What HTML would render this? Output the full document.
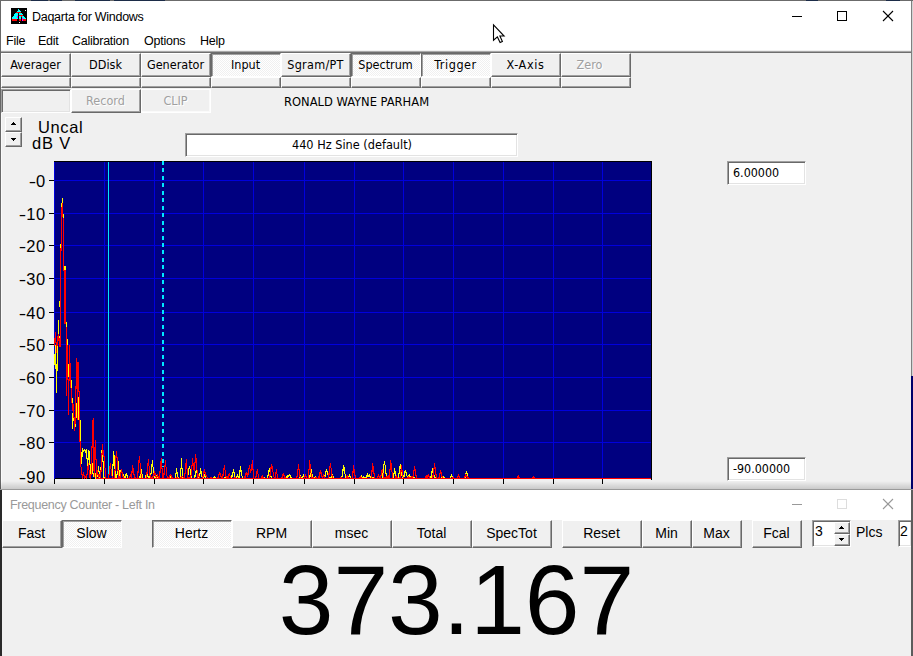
<!DOCTYPE html>
<html><head><meta charset="utf-8"><title>Daqarta for Windows</title>
<style>
*{box-sizing:border-box;margin:0;padding:0}
html,body{width:913px;height:656px;overflow:hidden;background:#f0f0f0}
body{position:relative;font-family:"Liberation Sans",sans-serif;color:#000}
.abs{position:absolute}
.tah{font-family:"DejaVu Sans Condensed","DejaVu Sans","Liberation Sans",sans-serif}
.btn{position:absolute;background:#f0f0f0;border-top:1px solid #fff;border-left:1px solid #fff;border-right:1px solid #696969;border-bottom:1px solid #696969;box-shadow:inset -1px -1px 0 #a0a0a0;padding:0 1px 1px 0;text-align:center;white-space:nowrap}
.btn span{display:block;position:relative}
.tb .btn{font-family:"DejaVu Sans Condensed","DejaVu Sans",sans-serif;font-size:12.5px;line-height:21px}
.tb .btn.dis{color:#a0a0a0;text-shadow:1px 1px 0 #fff}
.btn.down{border-top:1px solid #696969;border-left:1px solid #696969;border-right:1px solid #fff;border-bottom:1px solid #fff;box-shadow:inset 1px 1px 0 #a0a0a0;padding:1px 0 0 1px;background-color:#f7f7f7;background-image:repeating-conic-gradient(#ffffff 0% 25%, #f0f0f0 0% 50%);background-size:2px 2px}
.btn.down span{top:-1px;left:-1px}
.btn.flat{border:1px solid #fff;box-shadow:inset -1px -1px 0 #fafafa}
.strip{position:absolute;height:11px;background:#f0f0f0;border-top:1px solid #fff;border-left:1px solid #fff;border-right:1px solid #696969;border-bottom:1px solid #696969;box-shadow:inset -1px -1px 0 #a0a0a0}
.fc .btn{font-family:"Liberation Sans",sans-serif;font-size:14px;line-height:25px}
.sunk{position:absolute;background:#fff;border-top:1px solid #a0a0a0;border-left:1px solid #a0a0a0;border-right:1px solid #fff;border-bottom:1px solid #fff;box-shadow:inset 1px 1px 0 #696969,inset -1px -1px 0 #e3e3e3;padding:1px 0 0 1px;white-space:nowrap}
.menu span{position:absolute;top:33px;font-size:12.5px;line-height:16px;letter-spacing:-0.25px;white-space:nowrap}
.ylab{position:absolute;right:867px;font-size:16.5px;line-height:16px;white-space:nowrap;text-align:right;letter-spacing:0.7px}
.ylab i{display:inline-block;font-style:normal;transform:scaleX(1.35);transform-origin:100% 50%;margin-right:-0.8px}
</style></head><body>

<div class="abs" style="left:0;top:0;width:913px;height:1px;background:#6b6b6b"></div>
<div class="abs" style="left:31px;top:0;width:17px;height:1px;background:#1c2c48"></div>
<div class="abs" style="left:50px;top:0;width:12px;height:1px;background:#1c2c48"></div>
<div class="abs" style="left:75px;top:0;width:35px;height:1px;background:#1c2c48"></div>
<div class="abs" style="left:114px;top:0;width:51px;height:1px;background:#1c2c48"></div>
<div class="abs" style="left:806px;top:0;width:12px;height:1px;background:#1c2c48"></div>
<div class="abs" style="left:886px;top:0;width:14px;height:1px;background:#1c2c48"></div>
<div class="abs" style="left:1px;top:1px;width:910px;height:50px;background:#fff"></div>
<div class="abs" style="left:0;top:1px;width:1px;height:489px;background:#686868"></div>
<div class="abs" style="left:1px;top:53px;width:1px;height:436px;background:#fafafa"></div>
<div class="abs" style="left:911px;top:1px;width:1px;height:489px;background:#808080"></div>
<div class="abs" style="left:912px;top:1px;width:1px;height:489px;background:#d4d4d4"></div>
<svg class="abs" style="left:11px;top:8px" width="16" height="16" viewBox="0 0 16 16" shape-rendering="crispEdges"><rect width="16" height="16" fill="#000"/><rect x="7" y="1" width="1" height="1" fill="#00ffff"/><rect x="7" y="2" width="2" height="1" fill="#00ffff"/><rect x="14" y="2" width="1" height="1" fill="#ffffff"/><rect x="6" y="3" width="4" height="1" fill="#00ffff"/><rect x="5" y="4" width="5" height="1" fill="#ff0000"/><rect x="4" y="5" width="3" height="1" fill="#00ffff"/><rect x="8" y="5" width="3" height="1" fill="#00ffff"/><rect x="3" y="6" width="4" height="1" fill="#00ffff"/><rect x="8" y="6" width="4" height="1" fill="#00ffff"/><rect x="3" y="7" width="4" height="1" fill="#00ffff"/><rect x="8" y="7" width="4" height="1" fill="#ff0000"/><rect x="2" y="8" width="4" height="1" fill="#00ffff"/><rect x="6" y="8" width="1" height="1" fill="#ff00ff"/><rect x="8" y="8" width="2" height="1" fill="#00ffff"/><rect x="10" y="8" width="1" height="1" fill="#ff0000"/><rect x="11" y="8" width="2" height="1" fill="#00ffff"/><rect x="1" y="9" width="5" height="1" fill="#00ffff"/><rect x="6" y="9" width="1" height="1" fill="#ff00ff"/><rect x="8" y="9" width="2" height="1" fill="#00ffff"/><rect x="11" y="9" width="3" height="1" fill="#00ffff"/><rect x="1" y="10" width="6" height="1" fill="#00ffff"/><rect x="8" y="10" width="2" height="1" fill="#00ffff"/><rect x="11" y="10" width="1" height="1" fill="#ff00ff"/><rect x="12" y="10" width="3" height="1" fill="#00ffff"/><rect x="1" y="11" width="5" height="1" fill="#ff0000"/><rect x="8" y="11" width="2" height="1" fill="#ff0000"/><rect x="11" y="11" width="1" height="1" fill="#ff00ff"/><rect x="12" y="11" width="3" height="1" fill="#ff0000"/><rect x="1" y="12" width="5" height="1" fill="#ff0000"/><rect x="8" y="12" width="2" height="1" fill="#ff0000"/><rect x="11" y="12" width="1" height="1" fill="#ff00ff"/><rect x="12" y="12" width="3" height="1" fill="#ff0000"/><rect x="8" y="14" width="1" height="1" fill="#ffffff"/></svg>
<div class="abs" style="left:32px;top:9px;font-size:12.5px;line-height:16px;white-space:nowrap;letter-spacing:-0.27px">Daqarta for Windows</div>
<svg class="abs" style="left:780px;top:1px" width="130" height="30" viewBox="0 0 130 30" shape-rendering="crispEdges">
<rect x="12" y="15" width="10" height="1" fill="#000"/>
<rect x="57.5" y="10.5" width="9" height="9" fill="none" stroke="#000" stroke-width="1"/>
<g shape-rendering="auto" stroke="#000" stroke-width="1.1"><line x1="103" y1="10" x2="113" y2="20"/><line x1="113" y1="10" x2="103" y2="20"/></g>
</svg>
<svg class="abs" style="left:492px;top:23px" width="15" height="23" viewBox="0 0 15 23">
<path d="M1.5,1.9 L1.5,17.2 L5.4,13.9 L8.1,19.5 L10.4,18.5 L7.9,13 L12.1,13 Z" fill="#fff" stroke="#000" stroke-width="1.1" stroke-linejoin="miter"/></svg>
<div class="menu">
<span style="left:6px">File</span>
<span style="left:38px">Edit</span>
<span style="left:72px">Calibration</span>
<span style="left:144px">Options</span>
<span style="left:200px">Help</span>
</div>
<div class="abs" style="left:1px;top:50px;width:910px;height:1px;background:#f0f0f0"></div>
<div class="abs" style="left:1px;top:51px;width:910px;height:1px;background:#a8a8a8"></div>
<div class="abs" style="left:1px;top:52px;width:910px;height:1px;background:#6e6e6e"></div>
<div class="tb">
<div class="btn " style="left:1px;top:53px;width:70px;height:24px;"><span style="">Averager</span></div>
<div class="strip" style="left:1px;top:77px;width:70px"></div>
<div class="btn " style="left:71px;top:53px;width:70px;height:24px;"><span style="">DDisk</span></div>
<div class="strip" style="left:71px;top:77px;width:70px"></div>
<div class="btn " style="left:141px;top:53px;width:70px;height:24px;"><span style="">Generator</span></div>
<div class="strip" style="left:141px;top:77px;width:70px"></div>
<div class="btn down" style="left:211px;top:53px;width:70px;height:24px;"><span style="">Input</span></div>
<div class="strip" style="left:211px;top:77px;width:70px"></div>
<div class="btn " style="left:281px;top:53px;width:70px;height:24px;"><span style="letter-spacing:0.3px">Sgram/PT</span></div>
<div class="strip" style="left:281px;top:77px;width:70px"></div>
<div class="btn down" style="left:351px;top:53px;width:70px;height:24px;"><span style="">Spectrum</span></div>
<div class="strip" style="left:351px;top:77px;width:70px"></div>
<div class="btn down" style="left:421px;top:53px;width:70px;height:24px;"><span style="letter-spacing:0.55px">Trigger</span></div>
<div class="strip" style="left:421px;top:77px;width:70px"></div>
<div class="btn " style="left:491px;top:53px;width:70px;height:24px;"><span style="letter-spacing:0.65px">X-Axis</span></div>
<div class="strip" style="left:491px;top:77px;width:70px"></div>
<div class="btn dis" style="left:561px;top:53px;width:70px;height:24px;"><span style="left:-6px">Zero</span></div>
<div class="strip" style="left:561px;top:77px;width:70px"></div>
<div class="sunk" style="left:1px;top:89px;width:70px;height:24px;background:#f0f0f0"></div>
<div class="btn dis" style="left:71px;top:89px;width:70px;height:24px;"><span style="">Record</span></div>
<div class="btn dis flat" style="left:141px;top:89px;width:70px;height:24px;"><span style="">CLIP</span></div>
</div>
<div class="abs tah" style="left:284px;top:94px;font-size:12.8px;line-height:16px;white-space:nowrap">RONALD WAYNE PARHAM</div>
<div class="btn" style="left:5px;top:117px;width:17px;height:15px"></div>
<div class="btn" style="left:5px;top:132px;width:17px;height:15px"></div>
<svg class="abs" style="left:5px;top:117px" width="17" height="30" viewBox="0 0 17 30" shape-rendering="crispEdges">
<path d="M8,5h1v1h1v1h1v1h-5v-1h1v-1h1z M6,21h5v1h-1v1h-1v1h-1v-1h-1v-1h-1z" fill="#000"/></svg>
<div class="abs" style="left:38px;top:118px;font-size:16.5px;line-height:18px;white-space:nowrap;letter-spacing:0.6px">Uncal</div>
<div class="abs" style="left:32px;top:134px;font-size:16.5px;line-height:18px;white-space:nowrap;letter-spacing:0.8px">dB V</div>
<div class="sunk tah" style="left:185px;top:133px;width:333px;height:24px;text-align:center;font-size:12.6px;line-height:20px">440 Hz Sine (default)</div>
<div class="sunk tah" style="left:727px;top:161px;width:79px;height:24px;font-size:12.4px;line-height:20px;padding-left:5px">6.00000</div>
<div class="sunk tah" style="left:727px;top:457px;width:79px;height:24px;font-size:12.4px;line-height:20px;padding-left:5px">-90.00000</div>
<svg class="abs" style="left:0;top:155px" width="700" height="335" viewBox="0 155 700 335" shape-rendering="crispEdges">
<rect x="54" y="161" width="598" height="318" fill="#000080"/>
<rect x="54" y="161" width="598" height="1" fill="#000"/>
<rect x="54" y="478" width="598" height="1" fill="#000"/>
<rect x="54" y="180" width="598" height="1" fill="#0000dc"/>
<rect x="49" y="180" width="5" height="1" fill="#000"/>
<rect x="54" y="213" width="598" height="1" fill="#0000dc"/>
<rect x="49" y="213" width="5" height="1" fill="#000"/>
<rect x="54" y="245" width="598" height="1" fill="#0000dc"/>
<rect x="49" y="245" width="5" height="1" fill="#000"/>
<rect x="54" y="278" width="598" height="1" fill="#0000dc"/>
<rect x="49" y="278" width="5" height="1" fill="#000"/>
<rect x="54" y="312" width="598" height="1" fill="#0000dc"/>
<rect x="49" y="312" width="5" height="1" fill="#000"/>
<rect x="54" y="344" width="598" height="1" fill="#0000dc"/>
<rect x="49" y="344" width="5" height="1" fill="#000"/>
<rect x="54" y="377" width="598" height="1" fill="#0000dc"/>
<rect x="49" y="377" width="5" height="1" fill="#000"/>
<rect x="54" y="410" width="598" height="1" fill="#0000dc"/>
<rect x="49" y="410" width="5" height="1" fill="#000"/>
<rect x="54" y="442" width="598" height="1" fill="#0000dc"/>
<rect x="49" y="442" width="5" height="1" fill="#000"/>
<rect x="54" y="162" width="1" height="317" fill="#0000dc"/>
<rect x="54" y="479" width="1" height="5" fill="#000"/>
<rect x="104" y="162" width="1" height="317" fill="#0000dc"/>
<rect x="104" y="479" width="1" height="5" fill="#000"/>
<rect x="154" y="162" width="1" height="317" fill="#0000dc"/>
<rect x="154" y="479" width="1" height="5" fill="#000"/>
<rect x="203" y="162" width="1" height="317" fill="#0000dc"/>
<rect x="203" y="479" width="1" height="5" fill="#000"/>
<rect x="253" y="162" width="1" height="317" fill="#0000dc"/>
<rect x="253" y="479" width="1" height="5" fill="#000"/>
<rect x="304" y="162" width="1" height="317" fill="#0000dc"/>
<rect x="304" y="479" width="1" height="5" fill="#000"/>
<rect x="354" y="162" width="1" height="317" fill="#0000dc"/>
<rect x="354" y="479" width="1" height="5" fill="#000"/>
<rect x="403" y="162" width="1" height="317" fill="#0000dc"/>
<rect x="403" y="479" width="1" height="5" fill="#000"/>
<rect x="453" y="162" width="1" height="317" fill="#0000dc"/>
<rect x="453" y="479" width="1" height="5" fill="#000"/>
<rect x="503" y="162" width="1" height="317" fill="#0000dc"/>
<rect x="503" y="479" width="1" height="5" fill="#000"/>
<rect x="553" y="162" width="1" height="317" fill="#0000dc"/>
<rect x="553" y="479" width="1" height="5" fill="#000"/>
<rect x="602" y="162" width="1" height="317" fill="#0000dc"/>
<rect x="602" y="479" width="1" height="5" fill="#000"/>
<rect x="108" y="162" width="1" height="317" fill="#00e8ff"/>
<line x1="163" y1="161" x2="163" y2="467" stroke="#00e8ff" stroke-width="2" stroke-dasharray="4,3.45"/>
<path fill="#ffff00" d="M57,336h1v35h-1zM67,352h1v25h-1zM72,413h1v16h-1zM78,397h1v23h-1zM54,354h1v11h-1zM55,345h1v24h-1zM56,364h1v29h-1zM57,336h1v29h-1zM58,320h1v19h-1zM59,301h1v6h-1zM59,336h1v5h-1zM60,244h1v5h-1zM61,203h1v5h-1zM62,198h1v6h-1zM63,214h1v5h-1zM64,266h1v5h-1zM65,266h1v5h-1zM66,322h1v6h-1zM67,339h1v26h-1zM68,364h1v13h-1zM69,360h1v9h-1zM70,364h1v17h-1zM71,380h1v18h-1zM72,398h1v11h-1zM73,408h1v13h-1zM74,421h1v8h-1zM75,416h1v11h-1zM76,403h1v15h-1zM77,397h1v12h-1zM78,408h1v12h-1zM79,400h1v21h-1zM80,420h1v32h-1zM81,452h1v12h-1zM82,448h1v9h-1zM83,450h1v2h-1zM84,449h1v2h-1zM85,450h1v3h-1zM86,449h1v10h-1zM87,458h1v10h-1zM88,450h1v10h-1zM89,451h1v14h-1zM90,464h1v13h-1zM91,455h1v12h-1zM92,463h1v11h-1zM93,473h1v4h-1zM94,472h1v4h-1zM95,473h1v6h-1zM96,468h1v6h-1zM97,471h1v6h-1zM98,466h1v6h-1zM99,471h1v7h-1zM100,467h1v12h-1zM101,450h1v19h-1zM102,444h1v18h-1zM103,461h1v18h-1zM104,477h1v2h-1zM105,477h1v2h-1zM106,478h1v1h-1zM107,478h1v1h-1zM108,478h1v1h-1zM109,478h1v1h-1zM110,478h1v1h-1zM111,478h1v1h-1zM112,464h1v15h-1zM113,451h1v15h-1zM114,455h1v14h-1zM115,469h1v10h-1zM116,474h1v5h-1zM117,465h1v10h-1zM118,461h1v9h-1zM119,470h1v9h-1zM120,470h1v6h-1zM121,469h1v3h-1zM122,472h1v3h-1zM123,474h1v3h-1zM124,476h1v3h-1zM125,474h1v4h-1zM126,473h1v3h-1zM127,475h1v3h-1zM128,478h1v1h-1zM129,478h1v1h-1zM130,478h1v1h-1zM131,478h1v1h-1zM132,478h1v1h-1zM133,478h1v1h-1zM134,478h1v1h-1zM135,478h1v1h-1zM136,478h1v1h-1zM137,478h1v1h-1zM138,478h1v1h-1zM139,476h1v3h-1zM140,472h1v6h-1zM141,469h1v5h-1zM142,474h1v5h-1zM143,478h1v1h-1zM144,478h1v1h-1zM145,475h1v4h-1zM146,472h1v4h-1zM147,474h1v3h-1zM148,476h1v3h-1zM149,475h1v3h-1zM150,473h1v6h-1zM151,464h1v10h-1zM152,460h1v7h-1zM153,467h1v9h-1zM154,476h1v3h-1zM155,476h1v3h-1zM156,475h1v3h-1zM157,477h1v2h-1zM158,478h1v1h-1zM159,478h1v1h-1zM160,478h1v1h-1zM161,478h1v1h-1zM162,478h1v1h-1zM163,478h1v1h-1zM164,478h1v1h-1zM165,478h1v1h-1zM166,478h1v1h-1zM167,478h1v1h-1zM168,478h1v1h-1zM169,476h1v3h-1zM170,475h1v3h-1zM171,477h1v2h-1zM172,478h1v1h-1zM173,478h1v1h-1zM174,478h1v1h-1zM175,473h1v6h-1zM176,468h1v6h-1zM177,472h1v5h-1zM178,477h1v2h-1zM179,478h1v1h-1zM180,468h1v11h-1zM181,458h1v11h-1zM182,468h1v11h-1zM183,478h1v1h-1zM184,478h1v1h-1zM185,478h1v1h-1zM186,478h1v1h-1zM187,474h1v5h-1zM188,468h1v7h-1zM189,466h1v3h-1zM190,469h1v6h-1zM191,475h1v4h-1zM192,478h1v1h-1zM193,478h1v1h-1zM194,475h1v4h-1zM195,471h1v6h-1zM196,470h1v3h-1zM197,472h1v4h-1zM198,476h1v3h-1zM199,473h1v6h-1zM200,468h1v6h-1zM201,471h1v6h-1zM202,476h1v3h-1zM203,476h1v3h-1zM204,474h1v3h-1zM205,476h1v3h-1zM206,478h1v1h-1zM207,478h1v1h-1zM208,478h1v1h-1zM209,478h1v1h-1zM210,478h1v1h-1zM211,478h1v1h-1zM212,478h1v1h-1zM213,477h1v2h-1zM214,476h1v2h-1zM215,477h1v2h-1zM216,478h1v1h-1zM217,478h1v1h-1zM218,478h1v1h-1zM219,478h1v1h-1zM220,478h1v1h-1zM221,478h1v1h-1zM222,478h1v1h-1zM223,478h1v1h-1zM224,477h1v2h-1zM225,476h1v2h-1zM226,477h1v2h-1zM227,478h1v1h-1zM228,478h1v1h-1zM229,478h1v1h-1zM230,477h1v2h-1zM231,475h1v3h-1zM232,472h1v5h-1zM233,469h1v4h-1zM234,472h1v5h-1zM235,477h1v2h-1zM236,476h1v3h-1zM237,474h1v3h-1zM238,476h1v3h-1zM239,470h1v8h-1zM240,466h1v6h-1zM241,470h1v6h-1zM242,476h1v3h-1zM243,478h1v1h-1zM244,478h1v1h-1zM245,478h1v1h-1zM246,478h1v1h-1zM247,478h1v1h-1zM248,478h1v1h-1zM249,478h1v1h-1zM250,478h1v1h-1zM251,478h1v1h-1zM252,478h1v1h-1zM253,478h1v1h-1zM254,478h1v1h-1zM255,478h1v1h-1zM256,478h1v1h-1zM257,478h1v1h-1zM258,478h1v1h-1zM259,478h1v1h-1zM260,478h1v1h-1zM261,478h1v1h-1zM262,478h1v1h-1zM263,477h1v2h-1zM264,477h1v2h-1zM265,478h1v1h-1zM266,478h1v1h-1zM267,475h1v4h-1zM268,470h1v6h-1zM269,468h1v4h-1zM270,471h1v6h-1zM271,476h1v3h-1zM272,478h1v1h-1zM273,478h1v1h-1zM274,478h1v1h-1zM275,478h1v1h-1zM276,478h1v1h-1zM277,478h1v1h-1zM278,478h1v1h-1zM279,478h1v1h-1zM280,478h1v1h-1zM281,478h1v1h-1zM282,478h1v1h-1zM283,478h1v1h-1zM284,478h1v1h-1zM285,478h1v1h-1zM286,476h1v3h-1zM287,475h1v3h-1zM288,475h1v2h-1zM289,474h1v2h-1zM290,475h1v3h-1zM291,477h1v2h-1zM292,478h1v1h-1zM293,478h1v1h-1zM294,478h1v1h-1zM295,478h1v1h-1zM296,478h1v1h-1zM297,478h1v1h-1zM298,478h1v1h-1zM299,476h1v3h-1zM300,475h1v3h-1zM301,477h1v2h-1zM302,476h1v3h-1zM303,474h1v3h-1zM304,476h1v3h-1zM305,478h1v1h-1zM306,478h1v1h-1zM307,478h1v1h-1zM308,478h1v1h-1zM309,475h1v4h-1zM310,471h1v6h-1zM311,469h1v5h-1zM312,474h1v5h-1zM313,478h1v1h-1zM314,477h1v2h-1zM315,476h1v2h-1zM316,477h1v2h-1zM317,478h1v1h-1zM318,478h1v1h-1zM319,478h1v1h-1zM320,478h1v1h-1zM321,478h1v1h-1zM322,478h1v1h-1zM323,478h1v1h-1zM324,475h1v4h-1zM325,471h1v6h-1zM326,469h1v3h-1zM327,471h1v4h-1zM328,474h1v3h-1zM329,477h1v2h-1zM330,477h1v2h-1zM331,475h1v3h-1zM332,474h1v3h-1zM333,476h1v3h-1zM334,478h1v1h-1zM335,478h1v1h-1zM336,478h1v1h-1zM337,478h1v1h-1zM338,478h1v1h-1zM339,478h1v1h-1zM340,478h1v1h-1zM341,476h1v3h-1zM342,469h1v8h-1zM343,465h1v6h-1zM344,467h1v7h-1zM345,474h1v5h-1zM346,478h1v1h-1zM347,478h1v1h-1zM348,476h1v3h-1zM349,474h1v3h-1zM350,476h1v3h-1zM351,478h1v1h-1zM352,478h1v1h-1zM353,478h1v1h-1zM354,478h1v1h-1zM355,478h1v1h-1zM356,478h1v1h-1zM357,478h1v1h-1zM358,478h1v1h-1zM359,477h1v2h-1zM360,476h1v3h-1zM361,475h1v2h-1zM362,477h1v2h-1zM363,476h1v2h-1zM364,477h1v2h-1zM365,477h1v2h-1zM366,475h1v4h-1zM367,473h1v4h-1zM368,475h1v2h-1zM369,474h1v3h-1zM370,476h1v3h-1zM371,478h1v1h-1zM372,477h1v2h-1zM373,477h1v2h-1zM374,478h1v1h-1zM375,478h1v1h-1zM376,478h1v1h-1zM377,478h1v1h-1zM378,478h1v1h-1zM379,478h1v1h-1zM380,478h1v1h-1zM381,478h1v1h-1zM382,472h1v7h-1zM383,464h1v10h-1zM384,461h1v4h-1zM385,465h1v9h-1zM386,473h1v6h-1zM387,478h1v1h-1zM388,477h1v2h-1zM389,477h1v2h-1zM390,478h1v1h-1zM391,478h1v1h-1zM392,478h1v1h-1zM393,473h1v6h-1zM394,468h1v6h-1zM395,471h1v6h-1zM396,476h1v3h-1zM397,478h1v1h-1zM398,473h1v6h-1zM399,466h1v8h-1zM400,464h1v5h-1zM401,468h1v8h-1zM402,475h1v4h-1zM403,475h1v4h-1zM404,471h1v6h-1zM405,470h1v3h-1zM406,472h1v4h-1zM407,476h1v3h-1zM408,475h1v4h-1zM409,474h1v3h-1zM410,476h1v2h-1zM411,478h1v1h-1zM412,476h1v3h-1zM413,475h1v3h-1zM414,477h1v2h-1zM415,478h1v1h-1zM416,478h1v1h-1zM417,478h1v1h-1zM418,478h1v1h-1zM419,478h1v1h-1zM420,478h1v1h-1zM421,478h1v1h-1zM422,478h1v1h-1zM423,478h1v1h-1zM424,478h1v1h-1zM425,478h1v1h-1zM426,478h1v1h-1zM427,478h1v1h-1zM428,478h1v1h-1zM429,478h1v1h-1zM430,476h1v3h-1zM431,471h1v7h-1zM432,468h1v5h-1zM433,470h1v5h-1zM434,475h1v4h-1zM435,477h1v2h-1zM436,477h1v1h-1zM437,478h1v1h-1zM438,478h1v1h-1zM439,478h1v1h-1zM440,478h1v1h-1zM441,477h1v2h-1zM442,476h1v3h-1zM443,476h1v2h-1zM444,477h1v2h-1zM445,478h1v1h-1zM446,478h1v1h-1zM447,478h1v1h-1zM448,478h1v1h-1zM449,478h1v1h-1zM450,476h1v3h-1zM451,474h1v3h-1zM452,476h1v3h-1zM453,478h1v1h-1zM454,478h1v1h-1zM455,478h1v1h-1zM456,478h1v1h-1zM457,478h1v1h-1zM458,478h1v1h-1zM459,478h1v1h-1zM460,478h1v1h-1zM461,478h1v1h-1zM462,478h1v1h-1zM463,478h1v1h-1zM464,476h1v3h-1zM465,473h1v5h-1zM466,471h1v3h-1zM467,473h1v4h-1zM468,477h1v2h-1zM469,478h1v1h-1zM470,478h1v1h-1zM471,478h1v1h-1zM472,478h1v1h-1zM473,478h1v1h-1zM474,478h1v1h-1zM475,478h1v1h-1zM476,478h1v1h-1zM477,478h1v1h-1zM478,478h1v1h-1zM479,478h1v1h-1zM480,478h1v1h-1zM481,478h1v1h-1zM482,478h1v1h-1zM483,478h1v1h-1zM484,478h1v1h-1zM485,478h1v1h-1zM486,478h1v1h-1zM487,478h1v1h-1zM488,478h1v1h-1zM489,478h1v1h-1zM490,478h1v1h-1zM491,478h1v1h-1zM492,478h1v1h-1zM493,478h1v1h-1zM494,478h1v1h-1zM495,478h1v1h-1zM496,478h1v1h-1zM497,478h1v1h-1zM498,478h1v1h-1zM499,478h1v1h-1zM500,478h1v1h-1zM501,478h1v1h-1zM502,478h1v1h-1zM503,478h1v1h-1zM504,478h1v1h-1zM505,478h1v1h-1zM506,478h1v1h-1zM507,478h1v1h-1zM508,478h1v1h-1zM509,478h1v1h-1zM510,478h1v1h-1zM511,478h1v1h-1zM512,478h1v1h-1zM513,478h1v1h-1zM514,478h1v1h-1zM515,478h1v1h-1zM516,478h1v1h-1zM517,477h1v2h-1zM518,476h1v2h-1zM519,477h1v2h-1zM520,478h1v1h-1zM521,478h1v1h-1zM522,478h1v1h-1zM523,478h1v1h-1zM524,478h1v1h-1zM525,478h1v1h-1zM526,478h1v1h-1zM527,478h1v1h-1zM528,478h1v1h-1zM529,478h1v1h-1zM530,478h1v1h-1zM531,478h1v1h-1zM532,477h1v2h-1zM533,477h1v2h-1zM534,478h1v1h-1zM535,478h1v1h-1zM536,478h1v1h-1zM537,478h1v1h-1zM538,478h1v1h-1zM539,478h1v1h-1zM540,478h1v1h-1zM541,478h1v1h-1zM542,478h1v1h-1zM543,478h1v1h-1zM544,478h1v1h-1zM545,478h1v1h-1zM546,478h1v1h-1zM547,478h1v1h-1zM548,478h1v1h-1zM549,478h1v1h-1zM550,478h1v1h-1zM551,478h1v1h-1zM552,478h1v1h-1zM553,478h1v1h-1zM554,478h1v1h-1zM555,478h1v1h-1zM556,478h1v1h-1zM557,478h1v1h-1zM558,478h1v1h-1zM559,478h1v1h-1zM560,478h1v1h-1zM561,478h1v1h-1zM562,478h1v1h-1zM563,478h1v1h-1zM564,478h1v1h-1zM565,478h1v1h-1zM566,478h1v1h-1zM567,478h1v1h-1zM568,478h1v1h-1zM569,478h1v1h-1zM570,478h1v1h-1zM571,478h1v1h-1zM572,478h1v1h-1zM573,478h1v1h-1zM574,478h1v1h-1zM575,478h1v1h-1zM576,478h1v1h-1zM577,478h1v1h-1zM578,478h1v1h-1zM579,478h1v1h-1zM580,478h1v1h-1zM581,478h1v1h-1zM582,478h1v1h-1zM583,478h1v1h-1zM584,478h1v1h-1zM585,478h1v1h-1zM586,478h1v1h-1zM587,478h1v1h-1zM588,478h1v1h-1zM589,478h1v1h-1zM590,478h1v1h-1zM591,478h1v1h-1zM592,478h1v1h-1zM593,478h1v1h-1zM594,478h1v1h-1zM595,478h1v1h-1zM596,478h1v1h-1zM597,478h1v1h-1zM598,478h1v1h-1zM599,478h1v1h-1zM600,478h1v1h-1zM601,478h1v1h-1zM602,478h1v1h-1zM603,478h1v1h-1zM604,478h1v1h-1zM605,478h1v1h-1zM606,478h1v1h-1zM607,478h1v1h-1zM608,478h1v1h-1zM609,478h1v1h-1zM610,478h1v1h-1zM611,478h1v1h-1zM612,478h1v1h-1zM613,478h1v1h-1zM614,478h1v1h-1zM615,478h1v1h-1zM616,478h1v1h-1zM617,478h1v1h-1zM618,478h1v1h-1zM619,478h1v1h-1zM620,478h1v1h-1zM621,478h1v1h-1zM622,478h1v1h-1zM623,478h1v1h-1zM624,478h1v1h-1zM625,478h1v1h-1zM626,478h1v1h-1zM627,478h1v1h-1zM628,478h1v1h-1zM629,478h1v1h-1zM630,478h1v1h-1zM631,478h1v1h-1zM632,478h1v1h-1zM633,478h1v1h-1zM634,478h1v1h-1zM635,478h1v1h-1zM636,478h1v1h-1zM637,478h1v1h-1zM638,478h1v1h-1zM639,478h1v1h-1zM640,478h1v1h-1zM641,478h1v1h-1zM642,478h1v1h-1zM643,478h1v1h-1zM644,478h1v1h-1zM645,478h1v1h-1zM646,478h1v1h-1zM647,478h1v1h-1zM648,478h1v1h-1zM649,478h1v1h-1zM650,478h1v1h-1zM651,478h1v1h-1z"/>
<path fill="#ff0000" d="M69,345h1v32h-1zM77,362h1v58h-1zM93,418h1v53h-1zM54,338h1v8h-1zM55,332h1v11h-1zM56,342h1v11h-1zM57,336h1v10h-1zM58,334h1v7h-1zM59,338h1v9h-1zM60,248h1v99h-1zM61,207h1v44h-1zM62,203h1v14h-1zM63,218h1v53h-1zM64,270h1v54h-1zM65,270h1v54h-1zM66,327h1v69h-1zM67,345h1v35h-1zM68,379h1v36h-1zM69,345h1v36h-1zM70,363h1v25h-1zM71,388h1v15h-1zM72,403h1v8h-1zM73,404h1v14h-1zM74,417h1v14h-1zM75,386h1v38h-1zM76,358h1v31h-1zM77,389h1v31h-1zM78,362h1v30h-1zM79,391h1v51h-1zM80,441h1v26h-1zM81,467h1v8h-1zM82,474h1v5h-1zM83,472h1v4h-1zM84,475h1v4h-1zM85,476h1v2h-1zM86,474h1v5h-1zM87,466h1v9h-1zM88,463h1v7h-1zM89,470h1v8h-1zM90,474h1v5h-1zM91,446h1v29h-1zM92,420h1v28h-1zM93,418h1v30h-1zM94,447h1v30h-1zM95,440h1v20h-1zM96,459h1v20h-1zM97,470h1v5h-1zM98,474h1v5h-1zM99,474h1v3h-1zM100,470h1v9h-1zM101,453h1v19h-1zM102,444h1v11h-1zM103,450h1v7h-1zM104,456h1v12h-1zM105,468h1v11h-1zM106,478h1v1h-1zM107,478h1v1h-1zM108,474h1v5h-1zM109,466h1v9h-1zM110,463h1v6h-1zM111,469h1v7h-1zM112,476h1v2h-1zM113,478h1v1h-1zM114,470h1v9h-1zM115,456h1v15h-1zM116,451h1v7h-1zM117,457h1v14h-1zM118,470h1v9h-1zM119,476h1v3h-1zM120,472h1v6h-1zM121,469h1v4h-1zM122,472h1v5h-1zM123,476h1v3h-1zM124,478h1v1h-1zM125,478h1v1h-1zM126,478h1v1h-1zM127,478h1v1h-1zM128,478h1v1h-1zM129,476h1v3h-1zM130,474h1v3h-1zM131,471h1v8h-1zM132,465h1v8h-1zM133,468h1v7h-1zM134,474h1v5h-1zM135,477h1v2h-1zM136,478h1v1h-1zM137,471h1v8h-1zM138,460h1v13h-1zM139,456h1v7h-1zM140,463h1v11h-1zM141,474h1v5h-1zM142,478h1v1h-1zM143,478h1v1h-1zM144,478h1v1h-1zM145,478h1v1h-1zM146,472h1v7h-1zM147,463h1v11h-1zM148,459h1v7h-1zM149,466h1v10h-1zM150,475h1v4h-1zM151,477h1v2h-1zM152,476h1v2h-1zM153,473h1v4h-1zM154,471h1v4h-1zM155,473h1v4h-1zM156,476h1v3h-1zM157,474h1v3h-1zM158,476h1v3h-1zM159,471h1v8h-1zM160,461h1v12h-1zM161,458h1v11h-1zM162,468h1v11h-1zM163,473h1v6h-1zM164,465h1v10h-1zM165,460h1v7h-1zM166,467h1v9h-1zM167,476h1v3h-1zM168,477h1v2h-1zM169,475h1v3h-1zM170,474h1v2h-1zM171,475h1v3h-1zM172,477h1v2h-1zM173,478h1v1h-1zM174,478h1v1h-1zM175,478h1v1h-1zM176,477h1v2h-1zM177,477h1v2h-1zM178,478h1v1h-1zM179,478h1v1h-1zM180,477h1v2h-1zM181,476h1v2h-1zM182,476h1v1h-1zM183,477h1v1h-1zM184,473h1v6h-1zM185,463h1v11h-1zM186,459h1v10h-1zM187,469h1v10h-1zM188,477h1v2h-1zM189,477h1v2h-1zM190,475h1v4h-1zM191,465h1v11h-1zM192,458h1v8h-1zM193,463h1v7h-1zM194,462h1v9h-1zM195,454h1v9h-1zM196,458h1v12h-1zM197,470h1v9h-1zM198,474h1v3h-1zM199,476h1v3h-1zM200,478h1v1h-1zM201,478h1v1h-1zM202,476h1v3h-1zM203,471h1v6h-1zM204,469h1v4h-1zM205,472h1v4h-1zM206,475h1v2h-1zM207,477h1v2h-1zM208,478h1v1h-1zM209,478h1v1h-1zM210,477h1v2h-1zM211,477h1v2h-1zM212,478h1v1h-1zM213,478h1v1h-1zM214,478h1v1h-1zM215,478h1v1h-1zM216,478h1v1h-1zM217,477h1v2h-1zM218,474h1v4h-1zM219,472h1v3h-1zM220,473h1v4h-1zM221,476h1v3h-1zM222,474h1v5h-1zM223,468h1v8h-1zM224,465h1v5h-1zM225,470h1v7h-1zM226,476h1v3h-1zM227,476h1v3h-1zM228,474h1v4h-1zM229,473h1v3h-1zM230,476h1v3h-1zM231,478h1v1h-1zM232,478h1v1h-1zM233,478h1v1h-1zM234,477h1v2h-1zM235,477h1v2h-1zM236,478h1v1h-1zM237,478h1v1h-1zM238,478h1v1h-1zM239,478h1v1h-1zM240,478h1v1h-1zM241,478h1v1h-1zM242,478h1v1h-1zM243,478h1v1h-1zM244,476h1v3h-1zM245,473h1v5h-1zM246,472h1v3h-1zM247,473h1v4h-1zM248,468h1v7h-1zM249,465h1v4h-1zM250,469h1v4h-1zM251,464h1v7h-1zM252,460h1v10h-1zM253,469h1v10h-1zM254,478h1v1h-1zM255,476h1v3h-1zM256,471h1v6h-1zM257,469h1v5h-1zM258,474h1v5h-1zM259,478h1v1h-1zM260,478h1v1h-1zM261,476h1v3h-1zM262,475h1v3h-1zM263,477h1v2h-1zM264,478h1v1h-1zM265,478h1v1h-1zM266,478h1v1h-1zM267,478h1v1h-1zM268,478h1v1h-1zM269,474h1v5h-1zM270,467h1v9h-1zM271,464h1v5h-1zM272,466h1v6h-1zM273,472h1v5h-1zM274,477h1v2h-1zM275,472h1v6h-1zM276,469h1v5h-1zM277,474h1v5h-1zM278,478h1v1h-1zM279,478h1v1h-1zM280,478h1v1h-1zM281,477h1v2h-1zM282,474h1v4h-1zM283,473h1v3h-1zM284,475h1v3h-1zM285,477h1v2h-1zM286,478h1v1h-1zM287,478h1v1h-1zM288,478h1v1h-1zM289,478h1v1h-1zM290,478h1v1h-1zM291,478h1v1h-1zM292,478h1v1h-1zM293,478h1v1h-1zM294,478h1v1h-1zM295,478h1v1h-1zM296,476h1v3h-1zM297,469h1v8h-1zM298,464h1v6h-1zM299,469h1v8h-1zM300,476h1v3h-1zM301,478h1v1h-1zM302,478h1v1h-1zM303,478h1v1h-1zM304,476h1v3h-1zM305,474h1v3h-1zM306,476h1v3h-1zM307,478h1v1h-1zM308,469h1v10h-1zM309,460h1v10h-1zM310,464h1v9h-1zM311,473h1v6h-1zM312,477h1v2h-1zM313,477h1v2h-1zM314,478h1v1h-1zM315,477h1v2h-1zM316,477h1v2h-1zM317,478h1v1h-1zM318,476h1v3h-1zM319,472h1v6h-1zM320,470h1v4h-1zM321,472h1v5h-1zM322,476h1v3h-1zM323,474h1v3h-1zM324,476h1v3h-1zM325,478h1v1h-1zM326,478h1v1h-1zM327,478h1v1h-1zM328,473h1v6h-1zM329,466h1v9h-1zM330,463h1v5h-1zM331,468h1v8h-1zM332,475h1v4h-1zM333,478h1v1h-1zM334,478h1v1h-1zM335,478h1v1h-1zM336,478h1v1h-1zM337,478h1v1h-1zM338,478h1v1h-1zM339,478h1v1h-1zM340,477h1v2h-1zM341,477h1v2h-1zM342,478h1v1h-1zM343,478h1v1h-1zM344,478h1v1h-1zM345,478h1v1h-1zM346,476h1v3h-1zM347,475h1v3h-1zM348,477h1v2h-1zM349,478h1v1h-1zM350,478h1v1h-1zM351,478h1v1h-1zM352,471h1v8h-1zM353,465h1v8h-1zM354,469h1v7h-1zM355,475h1v4h-1zM356,478h1v1h-1zM357,478h1v1h-1zM358,478h1v1h-1zM359,477h1v2h-1zM360,476h1v2h-1zM361,477h1v2h-1zM362,478h1v1h-1zM363,478h1v1h-1zM364,478h1v1h-1zM365,478h1v1h-1zM366,478h1v1h-1zM367,478h1v1h-1zM368,478h1v1h-1zM369,478h1v1h-1zM370,478h1v1h-1zM371,470h1v9h-1zM372,463h1v9h-1zM373,466h1v8h-1zM374,473h1v5h-1zM375,478h1v1h-1zM376,478h1v1h-1zM377,476h1v3h-1zM378,474h1v3h-1zM379,476h1v3h-1zM380,475h1v4h-1zM381,470h1v6h-1zM382,469h1v4h-1zM383,473h1v5h-1zM384,477h1v2h-1zM385,477h1v2h-1zM386,476h1v2h-1zM387,476h1v3h-1zM388,475h1v3h-1zM389,469h1v10h-1zM390,460h1v10h-1zM391,463h1v9h-1zM392,472h1v7h-1zM393,478h1v1h-1zM394,478h1v1h-1zM395,476h1v3h-1zM396,475h1v3h-1zM397,477h1v2h-1zM398,478h1v1h-1zM399,477h1v2h-1zM400,470h1v8h-1zM401,465h1v7h-1zM402,470h1v7h-1zM403,477h1v2h-1zM404,478h1v1h-1zM405,478h1v1h-1zM406,478h1v1h-1zM407,477h1v2h-1zM408,476h1v2h-1zM409,477h1v2h-1zM410,477h1v2h-1zM411,476h1v2h-1zM412,476h1v3h-1zM413,470h1v7h-1zM414,466h1v5h-1zM415,469h1v7h-1zM416,475h1v4h-1zM417,478h1v1h-1zM418,478h1v1h-1zM419,478h1v1h-1zM420,478h1v1h-1zM421,478h1v1h-1zM422,478h1v1h-1zM423,478h1v1h-1zM424,478h1v1h-1zM425,476h1v3h-1zM426,475h1v3h-1zM427,475h1v3h-1zM428,474h1v3h-1zM429,476h1v3h-1zM430,478h1v1h-1zM431,478h1v1h-1zM432,475h1v4h-1zM433,468h1v9h-1zM434,463h1v6h-1zM435,467h1v8h-1zM436,474h1v5h-1zM437,478h1v1h-1zM438,477h1v2h-1zM439,473h1v5h-1zM440,470h1v4h-1zM441,472h1v5h-1zM442,476h1v3h-1zM443,478h1v1h-1zM444,478h1v1h-1zM445,478h1v1h-1zM446,478h1v1h-1zM447,478h1v1h-1zM448,478h1v1h-1zM449,478h1v1h-1zM450,478h1v1h-1zM451,478h1v1h-1zM452,477h1v2h-1zM453,477h1v2h-1zM454,478h1v1h-1zM455,478h1v1h-1zM456,478h1v1h-1zM457,476h1v3h-1zM458,474h1v3h-1zM459,476h1v3h-1zM460,478h1v1h-1zM461,478h1v1h-1zM462,478h1v1h-1zM463,478h1v1h-1zM464,476h1v3h-1zM465,474h1v3h-1zM466,475h1v2h-1zM467,476h1v2h-1zM468,477h1v2h-1zM469,478h1v1h-1zM470,478h1v1h-1zM471,478h1v1h-1zM472,478h1v1h-1zM473,478h1v1h-1zM474,478h1v1h-1zM475,478h1v1h-1zM476,478h1v1h-1zM477,478h1v1h-1zM478,478h1v1h-1zM479,478h1v1h-1zM480,478h1v1h-1zM481,478h1v1h-1zM482,478h1v1h-1zM483,478h1v1h-1zM484,478h1v1h-1zM485,478h1v1h-1zM486,478h1v1h-1zM487,478h1v1h-1zM488,478h1v1h-1zM489,478h1v1h-1zM490,478h1v1h-1zM491,478h1v1h-1zM492,478h1v1h-1zM493,478h1v1h-1zM494,478h1v1h-1zM495,478h1v1h-1zM496,478h1v1h-1zM497,478h1v1h-1zM498,478h1v1h-1zM499,478h1v1h-1zM500,478h1v1h-1zM501,478h1v1h-1zM502,478h1v1h-1zM503,478h1v1h-1zM504,478h1v1h-1zM505,478h1v1h-1zM506,478h1v1h-1zM507,478h1v1h-1zM508,478h1v1h-1zM509,478h1v1h-1zM510,478h1v1h-1zM511,478h1v1h-1zM512,478h1v1h-1zM513,478h1v1h-1zM514,478h1v1h-1zM515,478h1v1h-1zM516,478h1v1h-1zM517,476h1v3h-1zM518,475h1v3h-1zM519,477h1v2h-1zM520,478h1v1h-1zM521,478h1v1h-1zM522,478h1v1h-1zM523,478h1v1h-1zM524,478h1v1h-1zM525,478h1v1h-1zM526,478h1v1h-1zM527,478h1v1h-1zM528,478h1v1h-1zM529,478h1v1h-1zM530,478h1v1h-1zM531,478h1v1h-1zM532,477h1v2h-1zM533,476h1v2h-1zM534,477h1v2h-1zM535,478h1v1h-1zM536,478h1v1h-1zM537,478h1v1h-1zM538,478h1v1h-1zM539,478h1v1h-1zM540,478h1v1h-1zM541,478h1v1h-1zM542,478h1v1h-1zM543,478h1v1h-1zM544,478h1v1h-1zM545,478h1v1h-1zM546,478h1v1h-1zM547,478h1v1h-1zM548,478h1v1h-1zM549,478h1v1h-1zM550,478h1v1h-1zM551,478h1v1h-1zM552,478h1v1h-1zM553,478h1v1h-1zM554,478h1v1h-1zM555,478h1v1h-1zM556,478h1v1h-1zM557,478h1v1h-1zM558,478h1v1h-1zM559,478h1v1h-1zM560,478h1v1h-1zM561,478h1v1h-1zM562,478h1v1h-1zM563,478h1v1h-1zM564,478h1v1h-1zM565,478h1v1h-1zM566,478h1v1h-1zM567,478h1v1h-1zM568,478h1v1h-1zM569,478h1v1h-1zM570,478h1v1h-1zM571,478h1v1h-1zM572,478h1v1h-1zM573,478h1v1h-1zM574,478h1v1h-1zM575,478h1v1h-1zM576,478h1v1h-1zM577,478h1v1h-1zM578,478h1v1h-1zM579,478h1v1h-1zM580,478h1v1h-1zM581,478h1v1h-1zM582,478h1v1h-1zM583,478h1v1h-1zM584,478h1v1h-1zM585,478h1v1h-1zM586,478h1v1h-1zM587,478h1v1h-1zM588,478h1v1h-1zM589,478h1v1h-1zM590,478h1v1h-1zM591,478h1v1h-1zM592,478h1v1h-1zM593,478h1v1h-1zM594,478h1v1h-1zM595,478h1v1h-1zM596,478h1v1h-1zM597,478h1v1h-1zM598,478h1v1h-1zM599,478h1v1h-1zM600,478h1v1h-1zM601,478h1v1h-1zM602,478h1v1h-1zM603,478h1v1h-1zM604,478h1v1h-1zM605,478h1v1h-1zM606,478h1v1h-1zM607,478h1v1h-1zM608,478h1v1h-1zM609,478h1v1h-1zM610,478h1v1h-1zM611,478h1v1h-1zM612,478h1v1h-1zM613,478h1v1h-1zM614,478h1v1h-1zM615,478h1v1h-1zM616,478h1v1h-1zM617,478h1v1h-1zM618,478h1v1h-1zM619,478h1v1h-1zM620,478h1v1h-1zM621,478h1v1h-1zM622,478h1v1h-1zM623,478h1v1h-1zM624,478h1v1h-1zM625,478h1v1h-1zM626,478h1v1h-1zM627,478h1v1h-1zM628,478h1v1h-1zM629,478h1v1h-1zM630,478h1v1h-1zM631,478h1v1h-1zM632,478h1v1h-1zM633,478h1v1h-1zM634,478h1v1h-1zM635,478h1v1h-1zM636,478h1v1h-1zM637,478h1v1h-1zM638,478h1v1h-1zM639,478h1v1h-1zM640,478h1v1h-1zM641,478h1v1h-1zM642,478h1v1h-1zM643,478h1v1h-1zM644,478h1v1h-1zM645,478h1v1h-1zM646,478h1v1h-1zM647,478h1v1h-1zM648,478h1v1h-1zM649,478h1v1h-1zM650,478h1v1h-1zM651,478h1v1h-1z"/>
<rect x="97" y="478" width="554" height="1" fill="#ff0000"/>
<rect x="651" y="161" width="1" height="319" fill="#000"/>
</svg>
<div class="ylab" style="top:172.6px"><i>-</i>0</div>
<div class="ylab" style="top:205.6px"><i>-</i>10</div>
<div class="ylab" style="top:237.6px"><i>-</i>20</div>
<div class="ylab" style="top:270.6px"><i>-</i>30</div>
<div class="ylab" style="top:304.6px"><i>-</i>40</div>
<div class="ylab" style="top:336.6px"><i>-</i>50</div>
<div class="ylab" style="top:369.6px"><i>-</i>60</div>
<div class="ylab" style="top:402.6px"><i>-</i>70</div>
<div class="ylab" style="top:434.6px"><i>-</i>80</div>
<div class="ylab" style="top:468.6px"><i>-</i>90</div>
<div class="fc">
<div class="abs" style="left:0;top:481px;width:913px;height:8px;background:linear-gradient(to bottom,rgba(0,0,0,0),rgba(0,0,0,0.16))"></div>
<div class="abs" style="left:0;top:489px;width:913px;height:1px;background:#9a9a9a"></div>
<div class="abs" style="left:2px;top:490px;width:909px;height:30px;background:#fff"></div>
<div class="abs" style="left:2px;top:520px;width:909px;height:136px;background:#f0f0f0"></div>
<div class="abs" style="left:0;top:490px;width:2px;height:166px;background:#2a2a2a"></div>
<div class="abs" style="left:911px;top:490px;width:2px;height:166px;background:#5c5c5c"></div>
<div class="abs" style="left:911px;top:376px;width:2px;height:113px;background:#00006a"></div>
<div class="abs" style="left:10px;top:497px;font-size:12.5px;line-height:16px;color:#999;white-space:nowrap;letter-spacing:-0.3px">Frequency Counter - Left In</div>
<svg class="abs" style="left:780px;top:489px" width="130" height="30" viewBox="0 0 130 30" shape-rendering="crispEdges">
<rect x="12" y="15" width="10" height="1" fill="#999"/>
<rect x="57.5" y="10.5" width="9" height="9" fill="none" stroke="#ddd" stroke-width="1"/>
<g shape-rendering="auto" stroke="#999" stroke-width="1.1"><line x1="103" y1="10" x2="113" y2="20"/><line x1="113" y1="10" x2="103" y2="20"/></g>
</svg>
<div class="btn " style="left:2px;top:520px;width:60px;height:28px;"><span style="">Fast</span></div>
<div class="btn down" style="left:62px;top:520px;width:60px;height:28px;"><span style="">Slow</span></div>
<div class="btn down" style="left:152px;top:520px;width:80px;height:28px;"><span style="">Hertz</span></div>
<div class="btn " style="left:232px;top:520px;width:80px;height:28px;"><span style="">RPM</span></div>
<div class="btn " style="left:312px;top:520px;width:80px;height:28px;"><span style="">msec</span></div>
<div class="btn " style="left:392px;top:520px;width:80px;height:28px;"><span style="">Total</span></div>
<div class="btn " style="left:472px;top:520px;width:80px;height:28px;"><span style="">SpecTot</span></div>
<div class="btn " style="left:562px;top:520px;width:80px;height:28px;"><span style="">Reset</span></div>
<div class="btn " style="left:642px;top:520px;width:50px;height:28px;"><span style="">Min</span></div>
<div class="btn " style="left:692px;top:520px;width:50px;height:28px;"><span style="">Max</span></div>
<div class="btn " style="left:752px;top:520px;width:50px;height:28px;"><span style="">Fcal</span></div>
<div class="sunk" style="left:812px;top:520px;width:39px;height:27px;font-size:14px;line-height:18px;padding-left:2px">3</div>
<div class="btn" style="left:834px;top:522px;width:16px;height:12px"></div>
<div class="btn" style="left:834px;top:534px;width:16px;height:12px"></div>
<svg class="abs" style="left:834px;top:522px" width="16" height="24" viewBox="0 0 16 24" shape-rendering="crispEdges">
<path d="M7,4h1v1h1v1h1v1h-5v-1h1v-1h1z M5,16h5v1h-1v1h-1v1h-1v-1h-1v-1h-1z" fill="#000"/></svg>
<div class="abs" style="left:856px;top:523px;font-size:14px;line-height:18px">Plcs</div>
<div class="sunk" style="left:898px;top:520px;width:13px;height:27px;font-size:14px;line-height:18px;padding-left:1px;border-right:0">2</div>
<div class="abs" style="left:0;top:551px;width:913px;text-align:center;font-size:98.4px;line-height:98px;white-space:nowrap">373.167</div>
</div>
</body></html>
